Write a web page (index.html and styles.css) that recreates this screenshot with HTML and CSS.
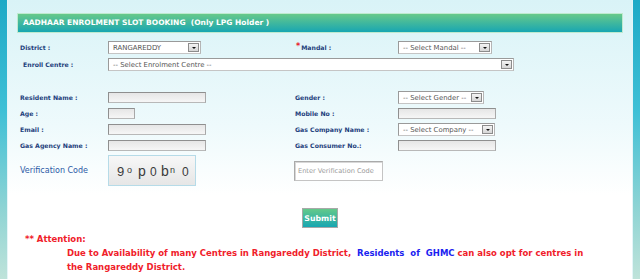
FILE: index.html
```html
<!DOCTYPE html>
<html>
<head>
<meta charset="utf-8">
<title>Aadhaar Enrolment Slot Booking</title>
<link rel="stylesheet" href="styles.css">
</head>
<body>
<div class="page">
  <div class="edge edge-left"></div>
  <main class="content">
    <div class="titlebar">AADHAAR ENROLMENT SLOT BOOKING&nbsp; (Only LPG Holder )</div>

    <div class="grid grid-top">
      <div class="label">District :</div>
      <div class="field"><div class="select w-district"><span>RANGAREDDY</span><i class="drop"></i></div></div>
      <div class="label"><span class="req">*</span>Mandal :</div>
      <div class="field"><div class="select w-mandal"><span>-- Select Mandal --</span><i class="drop"></i></div></div>

      <div class="label indent">Enroll Centre :</div>
      <div class="field span3"><div class="select w-centre"><span>-- Select Enrolment Centre --</span><i class="drop"></i></div></div>
    </div>

    <div class="grid grid-main">
      <div class="label">Resident Name :</div>
      <div class="field"><div class="input w-wide"></div></div>
      <div class="label">Gender :</div>
      <div class="field"><div class="select w-gender"><span>-- Select Gender --</span><i class="drop"></i></div></div>

      <div class="label">Age :</div>
      <div class="field"><div class="input w-age"></div></div>
      <div class="label">Mobile No :</div>
      <div class="field"><div class="input w-wide"></div></div>

      <div class="label">Email :</div>
      <div class="field"><div class="input w-wide"></div></div>
      <div class="label">Gas Company Name :</div>
      <div class="field"><div class="select w-company"><span>-- Select Company --</span><i class="drop"></i></div></div>

      <div class="label">Gas Agency Name :</div>
      <div class="field"><div class="input w-wide"></div></div>
      <div class="label">Gas Consumer No.:</div>
      <div class="field"><div class="input w-wide"></div></div>
    </div>

    <div class="grid grid-verify">
      <div class="label-verify">Verification Code</div>
      <div class="field"><div class="captcha"><span class="c1">9</span><span class="c2">o</span><span class="c3">p</span><span class="c4">0</span><span class="c5">b</span><span class="c6">n</span><span class="c7">0</span></div></div>
      <div class="field span2"><div class="code-input">Enter Verification Code</div></div>
    </div>

    <div class="actions"><button class="submit" type="button">Submit</button></div>

    <div class="notice">
      <div class="notice-head">** Attention:</div>
      <div class="notice-body">Due to Availability of many Centres in Rangareddy District,&nbsp; <span class="blue">Residents</span>&nbsp; <span class="blue">of</span>&nbsp; <span class="blue">GHMC</span> can also opt for centres in<br>the Rangareddy District.</div>
    </div>
  </main>
  <div class="edge edge-right"></div>
</div>
</body>
</html>
```
FILE: styles.css
```css
* { box-sizing: border-box; }
html, body { margin: 0; padding: 0; }
body {
  width: 640px;
  height: 279px;
  overflow: hidden;
  font-family: "DejaVu Sans", Verdana, sans-serif;
  background: #fff;
}
.page {
  display: flex;
  height: 279px;
}
.edge {
  width: 7px;
  flex: none;
  background: linear-gradient(#1ea9c6 0%, #3fc0d6 40%, #8fd4d4 75%, #bfe3da 100%);
}
.edge-left { border-right: 1px solid #e4f5f8; width: 8px; }
.edge-right { border-left: 1px solid #e4f5f8; width: 8px; }

.content {
  flex: 1;
  background: linear-gradient(#d9f3f7 0%, #eefafc 45%, #ffffff 70%, #ffffff 100%);
  padding-top: 13px;
}

.titlebar {
  margin: 0 9px;
  height: 20px;
  background: linear-gradient(#67c98a, #18a6b2);
  border: 1px solid #bfeacf;
  color: #fff;
  font-weight: bold;
  font-size: 7.5px;
  line-height: 18px;
  padding-left: 5px;
  white-space: nowrap;
}

.grid {
  display: grid;
  grid-template-columns: 88px 187px 103px 1fr;
  padding-left: 12px;
  align-items: center;
}
.grid-top {
  margin-top: 8px;
  grid-template-rows: 13px 13px;
  row-gap: 4px;
}
.grid-main {
  margin-top: 20px;
  grid-template-rows: 13px 13px 13px 13px;
  row-gap: 3px;
}
.grid-verify {
  margin-top: 3px;
  grid-template-rows: 31px;
}
.span3 { grid-column: 2 / span 3; }
.span2 { grid-column: 3 / span 2; }

.label {
  color: #1e3f7c;
  font-weight: bold;
  font-size: 6.2px;
  white-space: nowrap;
}
.label.indent { padding-left: 3px; }
.req { color: #e8202a; font-size: 8px; margin-left: 1px; margin-right: 1px; position: relative; top: -1px; }

.field { display: flex; align-items: center; }

.select {
  height: 13px;
  background: #fff;
  border: 1px solid #9a9a9a;
  border-right-color: #b5b5b5;
  border-bottom-color: #c5c5c5;
  display: flex;
  align-items: center;
  justify-content: space-between;
  padding: 0 1px 0 4px;
  font-size: 6.9px;
  color: #555;
  white-space: nowrap;
}
.drop {
  width: 11px;
  height: 9px;
  border: 1px solid #8c8c8c;
  background: linear-gradient(#f4f4f4, #d6d6d6);
  position: relative;
  flex: none;
}
.drop::after {
  content: "";
  position: absolute;
  left: 3px;
  top: 3px;
  border-left: 2px solid transparent;
  border-right: 2px solid transparent;
  border-top: 2px solid #111;
}
.w-district { width: 93px; }
.w-mandal { width: 94px; }
.w-centre { width: 406px; }
.w-gender { width: 86px; }
.w-company { width: 97px; }

.input {
  height: 11px;
  border: 1px solid #8f8f8f;
  border-right-color: #a8a8a8;
  border-bottom-color: #b8b8b8;
  background: linear-gradient(#e6e6e6, #f6f6f6);
}
.w-wide { width: 98px; }
.w-age { width: 27px; }

.label-verify {
  color: #2c5aa6;
  font-size: 8px;
  white-space: nowrap;
}
.captcha {
  width: 88px;
  height: 31px;
  border: 1px solid #b6dbe8;
  background: linear-gradient(#f7f7f7, #e6e6e6);
  display: flex;
  align-items: baseline;
  padding-left: 8px;
  padding-top: 8px;
  color: #3a3a3a;
  font-family: "Liberation Sans", sans-serif;
  line-height: 14px;
}
.captcha span { display: inline-block; }
.c1 { font-size: 13px; width: 10px; }
.c2 { font-size: 9px; width: 11px; position: relative; top: -3px; }
.c3 { font-size: 14px; width: 12px; }
.c4 { font-size: 12px; width: 11px; }
.c5 { font-size: 14px; width: 9px; }
.c6 { font-size: 9px; width: 12px; position: relative; top: -3px; }
.c7 { font-size: 12px; width: 8px; }

.code-input {
  margin-left: -1px;
  width: 89px;
  height: 20px;
  border: 1px solid #aaa;
  border-right-color: #c4c4c4;
  border-bottom-color: #c4c4c4;
  box-shadow: inset 1px 1px 0 #d8d8d8;
  background: #fff;
  color: #9a9a9a;
  font-size: 6.6px;
  line-height: 18px;
  padding-left: 3px;
  white-space: nowrap;
}

.actions {
  margin-top: 22px;
  display: flex;
  justify-content: center;
}
.submit {
  width: 36px;
  height: 20px;
  padding: 0;
  border: 1px solid #a8a8a8;
  background: linear-gradient(#63c98a, #17a6b2);
  color: #fff;
  font-family: "DejaVu Sans", sans-serif;
  font-weight: bold;
  font-size: 7.8px;
}

.notice {
  margin-top: 4px;
  padding-left: 17px;
  color: #f0202a;
  font-weight: bold;
  font-size: 8.5px;
  line-height: 14px;
}
.notice-body { padding-left: 42px; white-space: nowrap; }
.blue { color: #1a22f0; }
```
